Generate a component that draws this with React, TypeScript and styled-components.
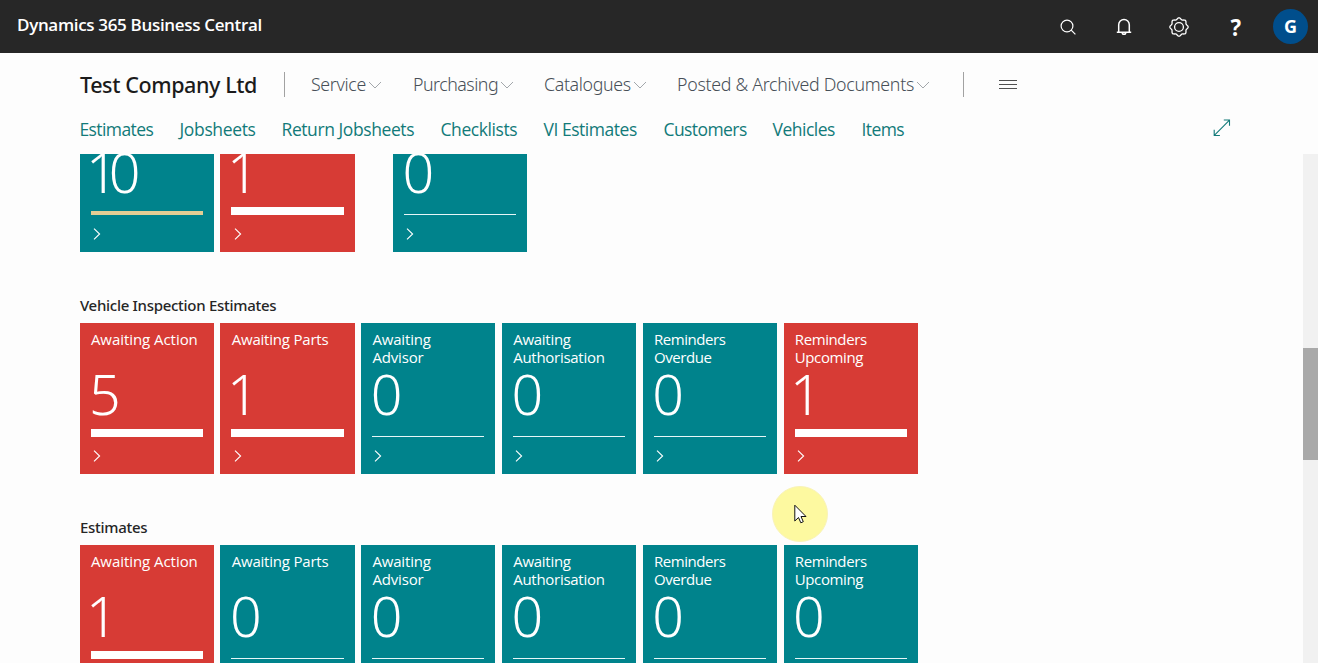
import React from 'react';
import styled, { createGlobalStyle } from 'styled-components';

const GlobalStyle = createGlobalStyle`
  *, *::before, *::after { box-sizing: border-box; }
  body {
    margin: 0;
    background: #fdfdfd;
    font-family: 'Open Sans', 'Noto Sans', sans-serif;
    overflow: hidden;
  }
`;

const Page = styled.div`
  position: relative;
  display: flex;
  flex-direction: column;
  height: 663px;
  overflow: hidden;
`;

const TopBar = styled.header`
  flex: none;
  display: flex;
  justify-content: space-between;
  height: 53px;
  padding: 0 10px 0 17px;
  background: #272727;
  color: #fff;
`;

const ProductName = styled.div`
  font: 600 17px/50px 'Open Sans', sans-serif;
  letter-spacing: -0.33px;
`;

const TopActions = styled.div`
  display: flex;
  align-items: center;
`;

const IconButton = styled.div`
  display: flex;
  align-items: center;
  justify-content: center;
  width: 55.5px;
  height: 55px;
`;

const HelpMark = styled.span`
  padding-left: 2px;
  font: 700 24px/55px 'Noto Sans', sans-serif;
  transform: scaleX(0.92);
`;

const Avatar = styled.div`
  width: 35px;
  height: 35px;
  margin-left: 10.5px;
  border-radius: 50%;
  background: #004e8c;
  text-align: center;
  font: 700 18px/35px 'Open Sans', sans-serif;
`;

const NavBar = styled.nav`
  flex: none;
  display: flex;
  align-items: center;
  height: 63px;
  padding-left: 80px;
`;

const Company = styled.h1`
  width: 204px;
  margin: 0;
  color: #1b1b1b;
  font: 500 21.5px/30px 'Noto Sans', sans-serif;
  letter-spacing: -0.4px;
  white-space: nowrap;
`;

const Divider = styled.span<{ $gap: number }>`
  width: 1px;
  height: 25px;
  margin-right: ${(p) => p.$gap}px;
  background: #a2a2a2;
`;

const MenuItem = styled.div<{ $width: number; $track: number }>`
  display: flex;
  align-items: center;
  gap: 2px;
  width: ${(p) => p.$width}px;
  color: #474f57;
  font: 300 17.8px/22px 'Noto Sans', sans-serif;
  letter-spacing: ${(p) => p.$track}px;
  white-space: nowrap;
`;

const MenuText = styled.span`
  padding-bottom: 2px;
`;

const LinkBar = styled.div`
  flex: none;
  display: flex;
  height: 38px;
  padding-left: 79.5px;
`;

const QuickLink = styled.a<{ $width: number; $track: number }>`
  width: ${(p) => p.$width}px;
  color: #127a79;
  font: 400 17.5px/26px 'Open Sans', sans-serif;
  letter-spacing: ${(p) => p.$track}px;
  white-space: nowrap;
`;

const ExpandButton = styled.div`
  margin: 3px 87.5px 0 auto;
`;

const Body = styled.main`
  flex: 1;
  display: flex;
  min-height: 0;
  overflow: hidden;
`;

const Groups = styled.div`
  flex: 1;
  margin-top: -124px;
  padding-left: 79.6px;
`;

const Group = styled.section`
  height: 222px;
`;

const GroupTitle = styled.h2`
  height: 71px;
  margin: 0;
  padding: 41px 0 0 0.4px;
  color: #262626;
  font: 500 15px/24px 'Noto Sans', sans-serif;
  letter-spacing: -0.29px;
`;

const TileRow = styled.div`
  display: flex;
  gap: 6.65px;
`;

const TileBox = styled.div<{ $alert: boolean; $offset: number }>`
  display: flex;
  flex-direction: column;
  flex: none;
  width: 134.15px;
  height: 151px;
  margin-left: ${(p) => p.$offset}px;
  padding: 8px 11px 0;
  background: ${(p) => (p.$alert ? '#d73b35' : '#00838c')};
  color: #fff;
`;

const TileLabel = styled.div<{ $track: number }>`
  height: 39px;
  padding-left: 0.3px;
  font-size: 15px;
  line-height: 17.6px;
  letter-spacing: ${(p) => p.$track}px;
  white-space: pre-line;
`;

const TileValue = styled.div<{ $shift: number }>`
  height: 50px;
  margin-left: ${(p) => p.$shift}px;
  font: 300 55.5px/48px 'Noto Sans', sans-serif;
  letter-spacing: -9px;
`;

const StatusBar = styled.div<{ $size: number; $color: string }>`
  height: ${(p) => p.$size}px;
  margin-top: ${(p) => 17 - p.$size}px;
  background: ${(p) => p.$color};
`;

const TileArrow = styled.div`
  padding: 13px 0 0 2.2px;
  line-height: 0;
`;

const ScrollTrack = styled.div`
  width: 15px;
  padding-top: 194px;
  background: #f1f1f1;
`;

const ScrollThumb = styled.div`
  height: 112px;
  background: #a9a9a9;
`;

const Pointer = styled.div`
  position: absolute;
  left: 772px;
  top: 486px;
  width: 56px;
  height: 56px;
  padding: 17px 0 0 21px;
  border-radius: 50%;
  background: #fdf9a0;
  border: 1px solid #f9f3b8;
  line-height: 0;
`;

const SearchIcon = () => (
  <svg width="16" height="16" viewBox="0 0 16 16" fill="none" stroke="#fff" strokeWidth="1.2">
    <circle cx="7" cy="7" r="5.9" />
    <path d="M11.2 11.2 15.4 15.4" />
  </svg>
);

const BellIcon = () => (
  <svg width="16" height="18" viewBox="0 0 16 18" fill="none" stroke="#fff" strokeWidth="1.5">
    <path d="M.8 14.2h14.4M2.7 14V6.8a5.3 5.3 0 0 1 10.6 0V14" />
    <path d="M6.2 14.4a1.8 1.8 0 0 0 3.6 0" />
  </svg>
);

const GearIcon = () => {
  const points: string[] = [];
  for (let i = 0; i <= 96; i++) {
    const a = (i / 96) * Math.PI * 2;
    const r = 8.4 + 0.75 * Math.cos(8 * a);
    points.push(`${(10 + r * Math.cos(a)).toFixed(2)} ${(10 + r * Math.sin(a)).toFixed(2)}`);
  }
  return (
    <svg width="20" height="20" viewBox="0 0 20 20" fill="none" stroke="#fff" strokeWidth="1.3">
      <path d={`M${points.join('L')}Z`} />
      <circle cx="10" cy="10" r="4.4" />
    </svg>
  );
};

const CaretIcon = () => (
  <svg width="14" height="8" viewBox="0 0 14 8" fill="none" stroke="#a3a7ab" strokeWidth="1">
    <path d="M1 1 7 7 13 1" />
  </svg>
);

const MenuIcon = () => (
  <svg width="18" height="10" viewBox="0 0 18 10" stroke="#505050" strokeWidth="1">
    <path d="M0 .5h18M0 4.5h18M0 8.5h18" />
  </svg>
);

const ExpandIcon = () => (
  <svg width="18" height="18" viewBox="0 0 18 18" fill="none" stroke="#127a79" strokeWidth="1.1">
    <path d="M1.3 16.3 16.5 1.1M10.8 1h5.7v5.7M1.2 10.8v5.7h5.7" />
  </svg>
);

const ArrowIcon = () => (
  <svg width="8" height="12" viewBox="0 0 8 12" fill="none" stroke="#fff" strokeWidth="1.1">
    <path d="M1 .6 6.6 6 1 11.4" />
  </svg>
);

const CursorIcon = () => (
  <svg width="13" height="20" viewBox="0 0 13 20" fill="#fff" stroke="#111" strokeWidth="1">
    <path d="M.8 1.2V17l3.7-3.5 2.3 5.3 2.5-1.1L7 12.5h5L.8 1.2Z" />
  </svg>
);

interface TextItem {
  text: string;
  width: number;
  track: number;
}

const menu: TextItem[] = [
  { text: 'Service', width: 102, track: -0.35 },
  { text: 'Purchasing', width: 131, track: -0.5 },
  { text: 'Catalogues', width: 133, track: -0.35 },
  { text: 'Posted & Archived Documents', width: 286, track: -0.29 },
];

const links: TextItem[] = [
  { text: 'Estimates', width: 100, track: -0.6 },
  { text: 'Jobsheets', width: 102, track: -0.35 },
  { text: 'Return Jobsheets', width: 159, track: -0.42 },
  { text: 'Checklists', width: 103, track: -0.42 },
  { text: 'VI Estimates', width: 120, track: -0.47 },
  { text: 'Customers', width: 109, track: -0.58 },
  { text: 'Vehicles', width: 89, track: -0.5 },
  { text: 'Items', width: 60, track: -0.6 },
];

interface TileData {
  label: string;
  value: string;
  status: 'alert' | 'warn' | 'plain';
  track?: number;
  offset?: number;
}

const buildRow = (values: string[], alerts: number[]): TileData[] =>
  [
    { label: 'Awaiting Action', track: -0.05 },
    { label: 'Awaiting Parts', track: -0.2 },
    { label: 'Awaiting\nAdvisor', track: -0.18 },
    { label: 'Awaiting\nAuthorisation', track: -0.28 },
    { label: 'Reminders\nOverdue', track: -0.45 },
    { label: 'Reminders\nUpcoming', track: -0.4 },
  ].map((t, i) => ({ ...t, value: values[i], status: alerts.includes(i) ? 'alert' : 'plain' }));

const groups: { title: string; tiles: TileData[] }[] = [
  {
    title: '',
    tiles: [
      { label: '', value: '10', status: 'warn' },
      { label: '', value: '1', status: 'alert' },
      { label: '', value: '0', status: 'plain', offset: 31.8 },
    ],
  },
  { title: 'Vehicle Inspection Estimates', tiles: buildRow(['5', '1', '0', '0', '0', '1'], [0, 1, 5]) },
  { title: 'Estimates', tiles: buildRow(['1', '0', '0', '0', '0', '0'], [0]) },
];

const bars = {
  alert: { size: 8, color: '#fff' },
  warn: { size: 4, color: '#e3cd94' },
  plain: { size: 1, color: '#e6f6f7' },
};

const Tile = ({ label, value, status, track = 0, offset = 0 }: TileData) => (
  <TileBox $alert={status === 'alert'} $offset={offset}>
    <TileLabel $track={track}>{label}</TileLabel>
    <TileValue $shift={value.startsWith('1') ? -4.5 : -1.5}>{value}</TileValue>
    <StatusBar $size={bars[status].size} $color={bars[status].color} />
    <TileArrow>
      <ArrowIcon />
    </TileArrow>
  </TileBox>
);

export default function App() {
  return (
    <Page>
      <GlobalStyle />
      <TopBar>
        <ProductName>Dynamics 365 Business Central</ProductName>
        <TopActions>
          <IconButton><SearchIcon /></IconButton>
          <IconButton><BellIcon /></IconButton>
          <IconButton><GearIcon /></IconButton>
          <IconButton><HelpMark>?</HelpMark></IconButton>
          <Avatar>G</Avatar>
        </TopActions>
      </TopBar>
      <NavBar>
        <Company>Test Company Ltd</Company>
        <Divider $gap={26} />
        {menu.map((m) => (
          <MenuItem key={m.text} $width={m.width} $track={m.track}>
            <MenuText>{m.text}</MenuText>
            <CaretIcon />
          </MenuItem>
        ))}
        <Divider $gap={35} />
        <MenuIcon />
      </NavBar>
      <LinkBar>
        {links.map((l) => (
          <QuickLink key={l.text} $width={l.width} $track={l.track}>{l.text}</QuickLink>
        ))}
        <ExpandButton><ExpandIcon /></ExpandButton>
      </LinkBar>
      <Body>
        <Groups>
          {groups.map((g) => (
            <Group key={g.title}>
              <GroupTitle>{g.title}</GroupTitle>
              <TileRow>
                {g.tiles.map((t, i) => <Tile key={i} {...t} />)}
              </TileRow>
            </Group>
          ))}
        </Groups>
        <ScrollTrack>
          <ScrollThumb />
        </ScrollTrack>
      </Body>
      <Pointer><CursorIcon /></Pointer>
    </Page>
  );
}
